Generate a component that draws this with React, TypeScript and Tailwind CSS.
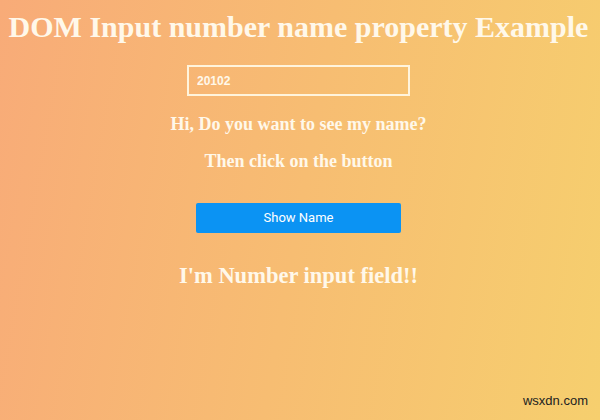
import React from "react";

export default function App() {
  return (
    <div className="relative w-[600px] h-[420px] overflow-hidden bg-[linear-gradient(100deg,#f8ab78_0%,#f7bd72_50%,#f6cf6e_100%)]">
      <div className="flex flex-col items-center pr-[3px] text-[#fff8ea] font-['Liberation_Serif',serif] font-bold">
        <h1 className="mt-[9px] whitespace-nowrap text-[30px] leading-[36px]">DOM Input number name property Example</h1>
        <input
          type="number"
          defaultValue={20102}
          className="mt-[20px] w-[223px] h-[31px] border-2 border-[#fff4dc] bg-transparent px-[8px] text-[12px] font-['Liberation_Sans',sans-serif] font-bold text-[#fff8ea] outline-none"
        />
        <p className="mt-[16px] text-[18px] leading-[24px]">Hi, Do you want to see my name?</p>
        <p className="mt-[13px] text-[18px] leading-[24px]">Then click on the button</p>
        <button className="mt-[30px] w-[205px] h-[30px] rounded-[2px] bg-[#0b93f3] text-white text-[13px] font-normal font-['Roboto',sans-serif]">
          Show Name
        </button>
        <p className="mt-[29px] text-[22.5px] leading-[28px]">I'm Number input field!!</p>
      </div>
      <span className="absolute right-[12px] bottom-[10px] text-[13px] text-[#222] font-['Liberation_Sans',sans-serif]">
        wsxdn.com
      </span>
    </div>
  );
}
